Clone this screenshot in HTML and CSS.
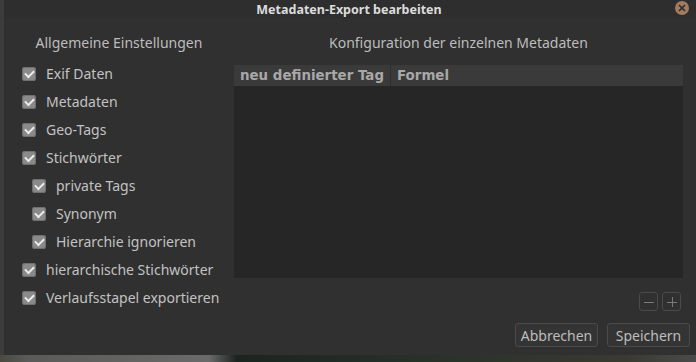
FILE: index.html
```html
<!DOCTYPE html>
<html lang="de">
<head>
    <meta charset="UTF-8">
    <title>Metadaten-Export bearbeiten</title>
    <link rel="stylesheet" href="styles.css">
</head>
<body>

    <div class="dialog">
        <!-- Title bar -->
        <div class="titlebar">
            <span class="title">Metadaten-Export bearbeiten</span>
            <span class="close">
                <svg width="8" height="8" viewBox="0 0 8 8"><path d="M1 1L7 7M7 1L1 7" stroke="#2b2b2b" stroke-width="1.6"/></svg>
            </span>
        </div>

        <div class="content">
            <!-- General settings -->
            <div class="left-col">
                <div class="heading">Allgemeine Einstellungen</div>
                <label class="check"><span class="box"></span>Exif Daten</label>
                <label class="check"><span class="box"></span>Metadaten</label>
                <label class="check"><span class="box"></span>Geo-Tags</label>
                <label class="check"><span class="box"></span>Stichwörter</label>
                <label class="check sub"><span class="box"></span>private Tags</label>
                <label class="check sub"><span class="box"></span>Synonym</label>
                <label class="check sub"><span class="box"></span>Hierarchie ignorieren</label>
                <label class="check"><span class="box"></span>hierarchische Stichwörter</label>
                <label class="check"><span class="box"></span>Verlaufsstapel exportieren</label>
            </div>

            <!-- Per metadata configuration -->
            <div class="right-col">
                <div class="heading">Konfiguration der einzelnen Metadaten</div>
                <div class="table">
                    <div class="table-head">
                        <div class="col-tag">neu definierter Tag</div>
                        <div class="col-formula">Formel</div>
                    </div>
                    <div class="table-body"></div>
                </div>
                <div class="tools">
                    <button class="tool-btn">
                        <svg width="12" height="12" viewBox="0 0 12 12"><path d="M1 6.5H11" stroke="#7a7a7a" stroke-width="1"/></svg>
                    </button>
                    <button class="tool-btn">
                        <svg width="12" height="12" viewBox="0 0 12 12"><path d="M1 6.5H11M6.5 1V11" stroke="#7a7a7a" stroke-width="1"/></svg>
                    </button>
                </div>
            </div>
        </div>

        <div class="footer">
            <button class="btn">Abbrechen</button>
            <button class="btn">Speichern</button>
        </div>
    </div>

    <div class="backdrop"></div>

</body>
</html>
```

FILE: styles.css
```css
body {
    margin: 0;
    padding: 0;
    background-color: #3c3c3c;
    font-family: "Noto Sans", "DejaVu Sans", sans-serif;
    font-size: 14px;
    color: #c4c4c4;
    width: 696px;
    height: 362px;
    overflow: hidden;
}
.dialog {
    margin-left: 4px;
    width: 692px;
    height: 355px;
    background-color: #303030;
    display: flex;
    flex-direction: column;
}
.titlebar {
    height: 18px;
    display: flex;
    align-items: center;
    justify-content: center;
    position: relative;
    background-color: #2e2e2e;
}
.title {
    font-weight: bold;
    font-size: 12.5px;
    color: #dcdcdc;
    margin-left: -2px;
}
.close {
    position: absolute;
    right: 7px;
    top: 1px;
    width: 14px;
    height: 14px;
    border-radius: 50%;
    background-color: #a27c5f;
    display: flex;
    align-items: center;
    justify-content: center;
}
.content {
    display: flex;
    flex: 1;
}
.heading {
    height: 20px;
    line-height: 20px;
    text-align: center;
    margin-top: 15px;
    color: #bdbdbd;
    white-space: nowrap;
}
.left-col {
    width: 212px;
    padding-left: 18px;
    display: flex;
    flex-direction: column;
}
.left-col .heading {
    margin-bottom: 6px;
    width: 194px;
}
.check {
    height: 28px;
    display: flex;
    align-items: center;
    gap: 10px;
    color: #c2c2c2;
    white-space: nowrap;
}
.check.sub {
    padding-left: 10px;
}
.box {
    width: 14px;
    height: 14px;
    border-radius: 3px;
    background-color: #8a8a8a;
    box-shadow: inset 0 0 0 1px #6e6e6e;
    position: relative;
    flex-shrink: 0;
    margin-top: 1px;
}
.box::after {
    content: "";
    position: absolute;
    left: 3px;
    top: 3px;
    width: 7px;
    height: 4px;
    border-left: 2px solid #ececec;
    border-bottom: 2px solid #ececec;
    transform: rotate(-45deg);
}
.right-col {
    flex: 1;
    padding-right: 13px;
    display: flex;
    flex-direction: column;
}
.table {
    margin-top: 12px;
    height: 213px;
    display: flex;
    flex-direction: column;
}
.table-head {
    height: 21px;
    background-color: #3a3a3a;
    display: flex;
    font-family: "DejaVu Sans", sans-serif;
    font-weight: bold;
    font-size: 13.4px;
    color: #a8a8a8;
    line-height: 21px;
}
.col-tag {
    padding-left: 6px;
    border-right: 1px solid #2e2e2e;
    box-sizing: border-box;
    width: 157px;
    white-space: nowrap;
}
.col-formula {
    padding-left: 6px;
}
.table-body {
    flex: 1;
    background-color: #262626;
}
.tools {
    display: flex;
    justify-content: flex-end;
    gap: 4px;
    margin-top: 14px;
    padding-right: 2px;
}
.tool-btn {
    width: 19px;
    height: 19px;
    padding: 0;
    background-color: #303030;
    border: 1px solid #4a4a4a;
    border-radius: 3px;
    display: flex;
    align-items: center;
    justify-content: center;
}
.footer {
    display: flex;
    justify-content: flex-end;
    gap: 9px;
    padding: 0 6px 8px 0;
}
.btn {
    height: 24px;
    padding: 0;
    width: 83px;
    font-family: "Noto Sans", "DejaVu Sans", sans-serif;
    font-size: 14px;
    color: #bdbdbd;
    background-color: #343434;
    border: 1px solid #4a4a4a;
    border-radius: 3px;
}
.backdrop {
    height: 7px;
    background: linear-gradient(90deg, #4a4a42 0%, #5a5a58 4%, #6a6a6a 30%, #1c2420 34%, #28302a 60%, #3a3a32 90%, #4a4a4a 100%);
}
```
